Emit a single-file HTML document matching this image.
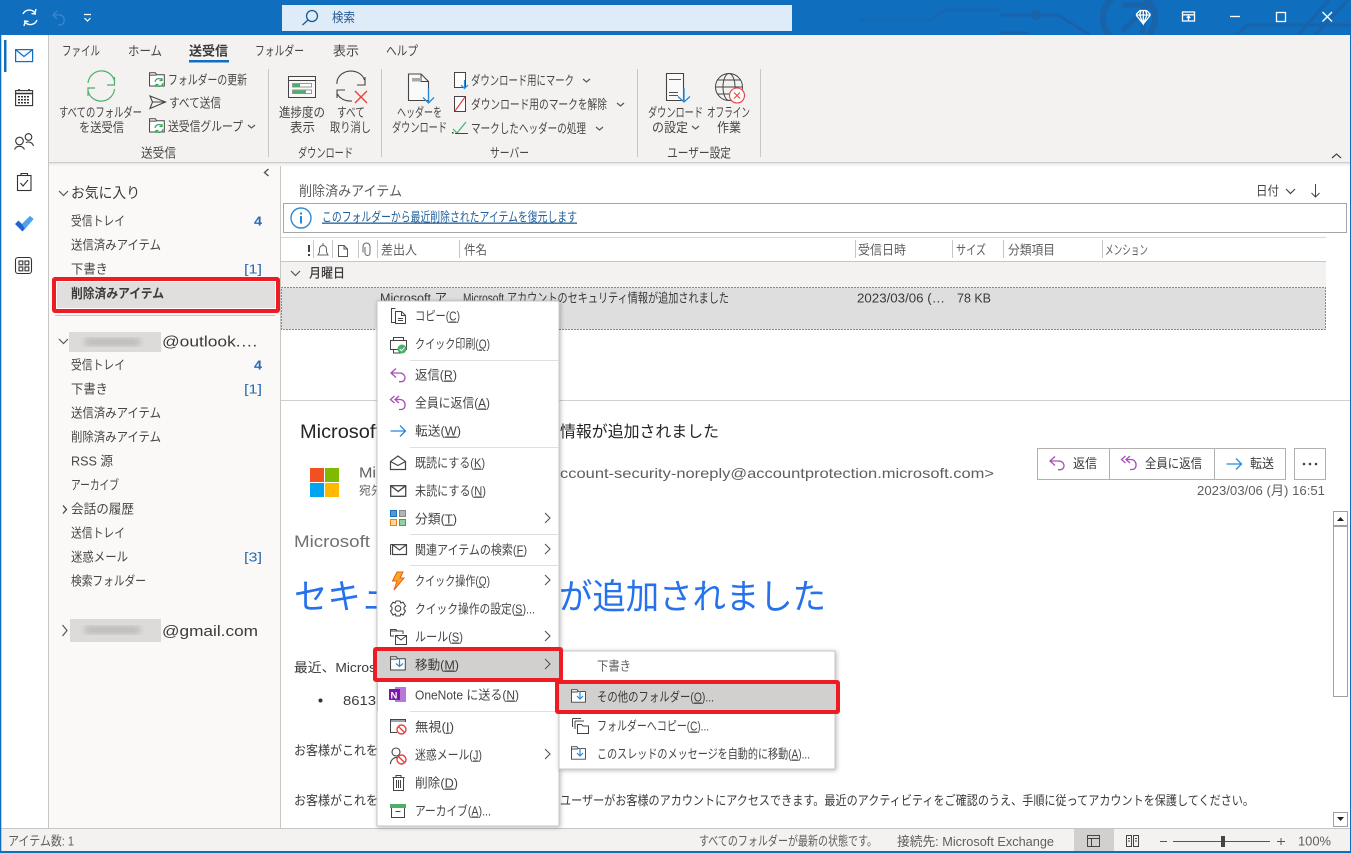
<!DOCTYPE html>
<html lang="ja"><head><meta charset="utf-8"><title>Outlook</title>
<style>
html,body{margin:0;padding:0;background:#fff;overflow:hidden}
svg{display:block}
text{font-family:"Liberation Sans","Noto Sans CJK JP",sans-serif;font-size:13px;fill:#484644;white-space:pre}
.u{text-decoration:underline}
.d{fill:#3b3a39}
.g{fill:#605e5c}
.b{font-weight:700}
.n{fill:none;stroke:#444;stroke-width:1.2}
.s{fill:none;stroke:#c8c6c4;stroke-width:1}
.c{fill:#2b6cb0}
</style></head><body>
<svg width="1351" height="853" viewBox="0 0 1351 853" xmlns="http://www.w3.org/2000/svg">
<defs>
<filter id="sh" x="-10%" y="-10%" width="120%" height="120%"><feDropShadow dx="1" dy="1" stdDeviation="2.5" flood-color="#000" flood-opacity=".28"/></filter>
<filter id="bl"><feGaussianBlur stdDeviation="3"/></filter>
<g id="reply" fill="none" stroke-width="1.3"><path d="M6 1.5 L1 6 L6 10.5 M1 6 H10 A5 5 0 0 1 15 11 A3.7 3.7 0 0 1 11.3 14.7 H9"/></g>
<g id="replyall" fill="none" stroke-width="1.3"><path d="M4.5 1 L0.5 4.5 L4.5 8 M9 1 L5 4.5 L9 8 M5 4.5 H10 A5 5 0 0 1 15 10 A4 4 0 0 1 11 14.5 H9"/></g>
<g id="fwd" fill="none" stroke-width="1.3"><path d="M0.5 8 H15.5 M10 2.5 L15.5 8 L10 13.5"/></g>
<g id="env" fill="#fff" stroke-width="1.3"><rect x=".7" y=".7" width="15" height="10.6"/><path d="M.7 .7 L8.2 6.5 L15.7 .7" fill="none"/></g>
<g id="fold"><path d="M.6 3.5 V15.5 H17 V3 H8.5 L7 .8 H.6 V3.5 H8" fill="#fff" stroke="#444" stroke-width="1.1"/></g>
<path id="chv" d="M0 0 L3.5 3 L7 0" fill="none" stroke="#555" stroke-width="1.2"/>
<path id="chr" d="M0 0 L5 5 L0 10" fill="none" stroke="#555" stroke-width="1.1"/>
</defs>

<!-- Window base -->
<rect width="1351" height="853" fill="#fff"/>
<rect width="1351" height="35" fill="#106ebe"/>
<g fill="none" stroke="#1a62a8" stroke-width="3" opacity=".9">
<path d="M1000 15 H1058 L1090 35"/><path d="M1237 35 L1247 25 H1351"/><path d="M1298 35 L1329 0 M1315 35 L1348 0"/><path d="M1000 33 H1028"/>
<circle cx="1036" cy="15" r="3.5"/><circle cx="1129" cy="18" r="26" stroke-width="6"/>
<path d="M1122 5 H1147 L1142 33 M1148 6 L1122 31" stroke-width="5"/>
<path d="M860 20 H930 M930 20 L945 10 H1000" opacity=".5"/>
</g>
<rect x="282" y="5" width="510" height="26" fill="#deecf9"/>
<g fill="none" stroke="#fff" stroke-width="1.4"><path d="M23 14 A7 7 0 0 1 35 13 L36 9 M36 14 L31.5 13.6"/><path d="M37 20 A7 7 0 0 1 25 22 L24 26 M24 21 L28.5 21.4"/></g>
<path d="M57 11 L53 15 L57 19 M53 15 H61 A5.5 5.5 0 0 1 61 25 H58" fill="none" stroke="#3b86cb" stroke-width="1.3"/>
<path d="M84 14.5 H91 M84.5 18 L87.5 21 L90.5 18" fill="none" stroke="#fff" stroke-width="1.2"/>
<g fill="none" stroke="#1e5a9a" stroke-width="1.3"><circle cx="312" cy="16" r="5.5"/><path d="M308 20 L302.5 25"/></g>
<text x="332" y="22" textLength="23" lengthAdjust="spacingAndGlyphs" style="fill:#2b5c8f">検索</text>
<g fill="none" stroke="#fff" stroke-width="1.3">
<path d="M1136.5 14 L1140 10.5 H1146.5 L1150 14 V15.5 L1143.3 24 L1136.5 15.5 Z M1136.5 15 H1150 M1141 10.5 L1139.6 15 L1143.3 24 L1147 15 L1145.6 10.5 M1143.3 10.5 V24"/>
<rect x="1182.5" y="12" width="12" height="9"/><path d="M1182.5 14.8 H1194.5 M1188.5 20.5 V16.5 M1186.7 18 L1188.5 16.2 L1190.3 18"/>
<path d="M1230 16.5 H1240"/><rect x="1276.5" y="12.5" width="9" height="9"/><path d="M1322.5 12 L1332 21.5 M1332 12 L1322.5 21.5"/>
</g>

<!-- Ribbon -->
<rect x="49" y="35" width="1301" height="127" fill="#f3f2f1"/>
<rect x="49" y="162" width="1301" height="1.5" fill="#cfcecc"/>
<rect x="49" y="164" width="1301" height="2" fill="#f4f4f4"/>
<text x="62" y="55.500" textLength="38" lengthAdjust="spacingAndGlyphs">ファイル</text>
<text x="128" y="55.500" textLength="34" lengthAdjust="spacingAndGlyphs">ホーム</text>
<text x="189" y="55.500" textLength="39" lengthAdjust="spacingAndGlyphs" class="b d">送受信</text>
<rect x="189" y="60" width="40" height="2.500" fill="#106ebe"/>
<text x="255" y="55.500" textLength="49" lengthAdjust="spacingAndGlyphs">フォルダー</text>
<text x="333" y="55.500" textLength="26" lengthAdjust="spacingAndGlyphs">表示</text>
<text x="386" y="55.500" textLength="32" lengthAdjust="spacingAndGlyphs">ヘルプ</text>
<g stroke="#c8c6c4"><path d="M268.500 69 V157 M381.500 69 V157 M637.500 69 V157 M760.500 69 V157"/></g>

<!-- Ribbon: send/receive -->
<g fill="none" stroke="#4caf6a" stroke-width="1.2">
<path d="M88 83 A13.500 13.500 0 0 1 114.500 81 M114.500 77 V85 H107"/><path d="M114.500 89 A13.500 13.500 0 0 1 88 91 M88 96 V88 H95"/>
</g>
<text x="59" y="117" textLength="83" lengthAdjust="spacingAndGlyphs">すべてのフォルダー</text>
<text x="79" y="132" textLength="45" lengthAdjust="spacingAndGlyphs">を送受信</text>
<g transform="translate(149,72)"><use href="#fold" transform="scale(.9)"/><path d="M6 10 A4 4 0 0 1 13 8 M14 11 A4 4 0 0 1 7 13 M13 6 V8.500 H10.500 M7 15 V12.500 H9.500" fill="none" stroke="#3aa35c" stroke-width="1.2"/></g>
<text x="168" y="84.500" textLength="79" lengthAdjust="spacingAndGlyphs">フォルダーの更新</text>
<path d="M150 96 L165.500 102 L150 108.500 L152.500 102 Z M152.500 102 H165" fill="none" stroke="#444" stroke-width="1.1"/>
<text x="169" y="107.500" textLength="52" lengthAdjust="spacingAndGlyphs">すべて送信</text>
<g transform="translate(149,118)"><use href="#fold" transform="scale(.9)"/><path d="M6 10 A4 4 0 0 1 13 8 M14 11 A4 4 0 0 1 7 13 M13 6 V8.500 H10.500 M7 15 V12.500 H9.500" fill="none" stroke="#3aa35c" stroke-width="1.2"/></g>
<text x="168" y="131" textLength="75" lengthAdjust="spacingAndGlyphs">送受信グループ</text>
<use href="#chv" x="248" y="125"/>
<text x="141" y="157.500" textLength="35" lengthAdjust="spacingAndGlyphs">送受信</text>

<!-- Ribbon: download -->
<g><rect x="288.500" y="76.500" width="27" height="21" fill="#f8f8f8" stroke="#444"/><path d="M288.500 80.500 H315.500" stroke="#444"/><rect x="292.500" y="83.500" width="19" height="3.500" fill="#fff" stroke="#999"/><rect x="292.500" y="90" width="19" height="3.500" fill="#fff" stroke="#999"/><rect x="293" y="84" width="7" height="3" fill="#4caf6a"/><rect x="293" y="90.500" width="13" height="3" fill="#4caf6a"/></g>
<text x="279" y="117" textLength="46" lengthAdjust="spacingAndGlyphs">進捗度の</text>
<text x="290" y="132" textLength="25" lengthAdjust="spacingAndGlyphs">表示</text>
<g fill="none" stroke="#444" stroke-width="1.1"><path d="M337 84 A14 12 0 0 1 364.500 80 M365 77 V85 H357"/><path d="M337 98 V90 H345 M337.500 94 A14 10 0 0 0 352 101"/></g>
<path d="M355 91 L367 103 M367 91 L355 103" stroke="#e8413c" stroke-width="1.400"/>
<text x="337" y="117" textLength="28" lengthAdjust="spacingAndGlyphs">すべて</text>
<text x="330" y="132" textLength="41" lengthAdjust="spacingAndGlyphs">取り消し</text>
<text x="298" y="157.500" textLength="55" lengthAdjust="spacingAndGlyphs">ダウンロード</text>

<!-- Ribbon: server -->
<g><path d="M408.500 74 H421 L428.500 81.500 V100.500 H408.500 Z" fill="#fafafa" stroke="#444" stroke-width="1.100"/><path d="M421 74 V81.500 H428.500" fill="none" stroke="#444"/><rect x="412" y="78" width="9" height="3.500" fill="#a8a8a8"/><path d="M428.500 88 V103 M423 97.500 L428.500 103 L434 97.500" fill="none" stroke="#2b88d8" stroke-width="1.300"/></g>
<text x="397" y="117" textLength="45" lengthAdjust="spacingAndGlyphs">ヘッダーを</text>
<text x="392" y="132" textLength="55" lengthAdjust="spacingAndGlyphs">ダウンロード</text>
<path d="M454.500 72.500 H465.500 V87.500 H454.500 Z" fill="#fff" stroke="#444"/><path d="M464.500 80 V88 M461 85 L464.500 88.500 L468 85" fill="none" stroke="#2b88d8" stroke-width="1.200"/>
<text x="471" y="85" textLength="103" lengthAdjust="spacingAndGlyphs">ダウンロード用にマーク</text><use href="#chv" x="583" y="79"/>
<rect x="454.500" y="96.500" width="11" height="15" fill="#fff" stroke="#444"/><path d="M455 111 L465 97" stroke="#e8413c" stroke-width="1.200"/>
<text x="471" y="109" textLength="136" lengthAdjust="spacingAndGlyphs">ダウンロード用のマークを解除</text><use href="#chv" x="617" y="103"/>
<path d="M453 129 L457 133 L466 122" fill="none" stroke="#4caf6a" stroke-width="1.200"/><path d="M455 133.500 H468" stroke="#444"/><rect x="452" y="132" width="1.500" height="1.500" fill="#333"/>
<text x="471" y="133" textLength="115" lengthAdjust="spacingAndGlyphs">マークしたヘッダーの処理</text><use href="#chv" x="596" y="127"/>
<text x="490" y="157.500" textLength="39" lengthAdjust="spacingAndGlyphs">サーバー</text>

<!-- Ribbon: user settings -->
<path d="M666.500 73.500 H683.500 V100.500 H666.500 Z" fill="#fafafa" stroke="#444" stroke-width="1.100"/><path d="M669 79.500 H681 M669 92.500 H678 M669 95.500 H678" stroke="#555"/>
<path d="M684 88 V102 M678 96.500 L684 102 L690 96.500" fill="none" stroke="#2b88d8" stroke-width="1.300"/>
<text x="648" y="117" textLength="55" lengthAdjust="spacingAndGlyphs">ダウンロード</text>
<text x="652" y="132" textLength="36" lengthAdjust="spacingAndGlyphs">の設定</text><use href="#chv" x="692" y="126"/>
<g fill="none" stroke="#444"><circle cx="729" cy="87" r="13.500"/><ellipse cx="729" cy="87" rx="6" ry="13.500"/><path d="M715.500 87 H742.500 M717.500 80 H740.500 M717.500 94 H740.500"/></g>
<circle cx="737" cy="95.500" r="7.500" fill="#fff" stroke="#e8413c" stroke-width="1.100"/><path d="M734 92.500 L740 98.500 M740 92.500 L734 98.500" stroke="#e8413c"/>
<text x="707" y="117" textLength="43" lengthAdjust="spacingAndGlyphs">オフライン</text>
<text x="717" y="132" textLength="24" lengthAdjust="spacingAndGlyphs">作業</text>
<text x="667" y="157.500" textLength="64" lengthAdjust="spacingAndGlyphs">ユーザー設定</text>
<path d="M1332 158 L1336.500 154 L1341 158" fill="none" stroke="#444" stroke-width="1.200"/>

<!-- Left rail -->
<rect x="0" y="35" width="48" height="818" fill="#fff"/>
<rect x="48" y="35" width="1" height="794" fill="#c8c6c4"/>
<rect x="4" y="40" width="2.500" height="32" fill="#106ebe"/>
<g stroke="#106ebe" fill="#f6fbff" stroke-width="1.200"><rect x="15.600" y="49.600" width="17" height="12"/><path d="M15.600 49.600 L24 56.500 L32.600 49.600" fill="none"/></g>
<g stroke="#333" fill="none" stroke-width="1.100"><rect x="15.600" y="90.600" width="17" height="15"/><path d="M15.600 93.500 H32.600 M19 89 V91 M29 89 V91" stroke-width="1.600"/></g>
<path d="M18 96h2v1.500h-2zM21 96h2v1.500h-2zM24 96h2v1.500h-2zM27 96h2v1.500h-2zM18 99h2v1.500h-2zM21 99h2v1.500h-2zM24 99h2v1.500h-2zM27 99h2v1.500h-2zM18 102h2v1.500h-2zM21 102h2v1.500h-2zM24 102h2v1.500h-2zM27 102h2v1.500h-2z" fill="#333"/>
<g fill="none" stroke="#333" stroke-width="1.100"><circle cx="19.500" cy="141" r="3.800"/><path d="M14.500 149.500 A5.500 5.500 0 0 1 24.500 149.500"/><circle cx="28.500" cy="137" r="3.300"/><path d="M26 142.500 A5.500 5.500 0 0 1 33.500 146"/></g>
<g fill="none" stroke="#333" stroke-width="1.100"><rect x="17.500" y="175.500" width="13.500" height="15"/><path d="M21 175.500 V173.500 H27.500 V175.500"/><path d="M20.500 183 L23 186 L28 180"/></g>
<path d="M15 224 L18.500 220.500 L22 224 L30 216 L33.500 219 L22.500 231.500 Z" fill="#2564cf"/>
<path d="M22 224 L30 216 L33.500 219 L25 229 Z" fill="#4da3f0"/>
<g fill="none" stroke="#333" stroke-width="1.100"><rect x="15.500" y="257.500" width="16" height="16" rx="2.500"/><rect x="19" y="261" width="3.800" height="3.800"/><rect x="25" y="261" width="3.800" height="3.800"/><rect x="19" y="267" width="3.800" height="3.800"/><rect x="25" y="267" width="3.800" height="3.800"/></g>

<!-- Folder pane -->
<rect x="49" y="166" width="231" height="663" fill="#faf9f8"/>
<rect x="280" y="166" width="1" height="663" fill="#c8c6c4"/>
<path d="M268.500 169 L264.500 172.500 L268.500 176" fill="none" stroke="#555" stroke-width="1.400"/>
<path d="M59 191 L63.500 195.500 L68 191" fill="none" stroke="#555" stroke-width="1.200"/>
<text x="71" y="198" textLength="69" lengthAdjust="spacingAndGlyphs" style="font-size:14.500px" class="d">お気に入り</text>
<text x="71" y="225.500" textLength="54" lengthAdjust="spacingAndGlyphs">受信トレイ</text>
<text x="254" y="225.500" class="b c" style="font-size:13px" textLength="8" lengthAdjust="spacingAndGlyphs">4</text>
<text x="71" y="249.500" textLength="90" lengthAdjust="spacingAndGlyphs">送信済みアイテム</text>
<text x="71" y="273.500" textLength="37" lengthAdjust="spacingAndGlyphs">下書き</text>
<text x="244" y="273.500" class="c" style="font-size:13px" textLength="18" lengthAdjust="spacingAndGlyphs">[1]</text>
<rect x="54" y="279" width="224" height="32" fill="#fff" stroke="#ed1c24" stroke-width="4" rx="1"/>
<rect x="57" y="282" width="218" height="26" fill="#e1dfdd"/>
<text x="71" y="298" textLength="93" lengthAdjust="spacingAndGlyphs" class="b d">削除済みアイテム</text>
<path d="M55 315.500 H275" stroke="#c8c6c4"/>
<path d="M59 339 L63.500 343.500 L68 339" fill="none" stroke="#555" stroke-width="1.200"/>
<rect x="69" y="332" width="92" height="20" fill="#dcdbd9"/><rect x="85" y="338" width="55" height="8" fill="#bdbcba" filter="url(#bl)"/>
<text x="162" y="346.500" textLength="96" lengthAdjust="spacingAndGlyphs" style="font-size:15px" class="d">@outlook.…</text>
<text x="71" y="369.500" textLength="54" lengthAdjust="spacingAndGlyphs">受信トレイ</text>
<text x="254" y="369.500" class="b c" style="font-size:13px" textLength="8" lengthAdjust="spacingAndGlyphs">4</text>
<text x="71" y="393.500" textLength="37" lengthAdjust="spacingAndGlyphs">下書き</text>
<text x="244" y="393.500" class="c" style="font-size:13px" textLength="18" lengthAdjust="spacingAndGlyphs">[1]</text>
<text x="71" y="417.500" textLength="90" lengthAdjust="spacingAndGlyphs">送信済みアイテム</text>
<text x="71" y="441.500" textLength="90" lengthAdjust="spacingAndGlyphs">削除済みアイテム</text>
<text x="71" y="465.500" textLength="42" lengthAdjust="spacingAndGlyphs">RSS 源</text>
<text x="71" y="489.500" textLength="48" lengthAdjust="spacingAndGlyphs">アーカイブ</text>
<path d="M63 505.500 L66.500 509.500 L63 513.500" fill="none" stroke="#444" stroke-width="1.300"/>
<text x="71" y="513.500" textLength="63" lengthAdjust="spacingAndGlyphs">会話の履歴</text>
<text x="71" y="537.500" textLength="54" lengthAdjust="spacingAndGlyphs">送信トレイ</text>
<text x="71" y="561.500" textLength="57" lengthAdjust="spacingAndGlyphs">迷惑メール</text>
<text x="244" y="561.500" class="c" style="font-size:13px" textLength="18" lengthAdjust="spacingAndGlyphs">[3]</text>
<text x="71" y="585.500" textLength="75" lengthAdjust="spacingAndGlyphs">検索フォルダー</text>
<path d="M62.500 625 L67 630.500 L62.500 636" fill="none" stroke="#555" stroke-width="1.200"/>
<rect x="70" y="619" width="91" height="23" fill="#dcdbd9"/><rect x="85" y="626" width="55" height="8" fill="#bdbcba" filter="url(#bl)"/>
<text x="162" y="636" textLength="96" lengthAdjust="spacingAndGlyphs" style="font-size:15px" class="d">@gmail.com</text>

<!-- List -->
<text x="299" y="196" textLength="103" lengthAdjust="spacingAndGlyphs" style="font-size:14px" class="g">削除済みアイテム</text>
<text x="1256" y="195.500" textLength="23" lengthAdjust="spacingAndGlyphs">日付</text>
<path d="M1286 189 L1290.500 193.500 L1295 189" fill="none" stroke="#444" stroke-width="1.200"/>
<path d="M1315.500 184 V197 M1311.500 193 L1315.500 197 L1319.500 193" fill="none" stroke="#444"/>
<rect x="283.500" y="203.500" width="1063" height="29" fill="#fff" stroke="#a6a6a6"/>
<circle cx="301" cy="218" r="10" fill="#fff" stroke="#2b88d8" stroke-width="1.400"/>
<rect x="300" y="216" width="2" height="7.500" fill="#2b88d8"/><rect x="300" y="212.500" width="2" height="2" fill="#2b88d8"/>
<text x="322" y="221.500" textLength="255" lengthAdjust="spacingAndGlyphs" style="fill:#1f5f9c" class="u">このフォルダーから最近削除されたアイテムを復元します</text>

<rect x="281" y="237" width="1045" height="1" fill="#d8d8d8"/>
<rect x="281" y="261" width="1045" height="1" fill="#c8c6c4"/>
<rect x="308" y="245" width="2" height="7" fill="#444"/><rect x="308" y="254" width="2" height="2" fill="#444"/>
<g stroke="#c8c6c4"><path d="M313.500 240 V258 M332.500 240 V258 M358.500 240 V258 M377.500 240 V258 M459.500 240 V258 M855.500 240 V258 M952.500 240 V258 M1003.500 240 V258 M1102.500 240 V258"/></g>
<path d="M318 255 H328 L326.500 252 V249 A3.500 3.500 0 0 0 319.500 249 V252 Z M323 243 V245" fill="none" stroke="#666"/>
<path d="M338.500 245.500 H344 L347.500 249 V256.500 H338.500 Z M344 245.500 V249 H347.500" fill="none" stroke="#555"/>
<path d="M365 247.500 V253.500 A2.500 2.500 0 0 0 370 253.500 V247 A3.500 3.500 0 0 0 363 247 V253" fill="none" stroke="#666" transform="translate(0,-.5)"/>
<text x="381" y="254.500" textLength="36" lengthAdjust="spacingAndGlyphs" class="g">差出人</text>
<text x="464" y="254.500" textLength="23" lengthAdjust="spacingAndGlyphs" class="g">件名</text>
<text x="858" y="254.500" textLength="48" lengthAdjust="spacingAndGlyphs" class="g">受信日時</text>
<text x="956" y="254.500" textLength="30" lengthAdjust="spacingAndGlyphs" class="g">サイズ</text>
<text x="1008" y="254.500" textLength="47" lengthAdjust="spacingAndGlyphs" class="g">分類項目</text>
<text x="1105" y="254.500" textLength="43" lengthAdjust="spacingAndGlyphs" class="g">メンション</text>
<rect x="281" y="262" width="1045" height="25" fill="#f3f2f1"/>
<path d="M291 271 L295.500 275.500 L300 271" fill="none" stroke="#555" stroke-width="1.200"/>
<text x="309" y="277.500" textLength="36" lengthAdjust="spacingAndGlyphs" class="d" style="font-weight:500">月曜日</text>
<rect x="281.500" y="287.500" width="1044" height="42" fill="#dedede"/>
<rect x="281.500" y="287.500" width="1044" height="42" fill="none" stroke="#222" stroke-dasharray="1 2" shape-rendering="crispEdges"/>
<text x="380" y="302.500" textLength="67" lengthAdjust="spacingAndGlyphs" class="d">Microsoft ア</text>
<text x="463" y="302.500" textLength="266" lengthAdjust="spacingAndGlyphs" class="d">Microsoft アカウントのセキュリティ情報が追加されました</text>
<text x="857" y="302.500" textLength="88" lengthAdjust="spacingAndGlyphs" class="d">2023/03/06 (…</text>
<text x="957" y="302.500" textLength="34" lengthAdjust="spacingAndGlyphs" class="d">78 KB</text>
<rect x="281" y="400" width="1070" height="1" fill="#d2d0ce"/>

<!-- Reading pane -->
<text x="300" y="438" textLength="81" lengthAdjust="spacingAndGlyphs" style="font-size:19px;fill:#252423">Microsoft</text>
<text x="560" y="437" textLength="159" lengthAdjust="spacingAndGlyphs" style="font-size:16px;fill:#252423">情報が追加されました</text>
<rect x="310" y="468" width="14" height="14" fill="#f25022"/><rect x="325" y="468" width="14" height="14" fill="#7fba00"/>
<rect x="310" y="483" width="14" height="14" fill="#00a4ef"/><rect x="325" y="483" width="14" height="14" fill="#ffb900"/>
<text x="359" y="477.500" textLength="17" lengthAdjust="spacingAndGlyphs" style="font-size:15px" class="g">Mi</text>
<text x="359" y="494.500" class="g" style="font-size:12px">宛先</text>
<text x="560" y="478" textLength="434" lengthAdjust="spacingAndGlyphs" style="font-size:14px" class="g">ccount-security-noreply@accountprotection.microsoft.com&gt;</text>

<rect x="1037.500" y="448.500" width="248" height="31" fill="#fff" stroke="#b3b0ad"/>
<path d="M1109.500 449 V479 M1214.500 449 V479" stroke="#b3b0ad"/>
<use href="#reply" x="1049" y="455" stroke="#a64fb5"/>
<text x="1073" y="468" textLength="24" lengthAdjust="spacingAndGlyphs" class="d">返信</text>
<use href="#replyall" x="1121" y="455" stroke="#a64fb5"/>
<text x="1145" y="468" textLength="57" lengthAdjust="spacingAndGlyphs" class="d">全員に返信</text>
<use href="#fwd" x="1226" y="456" stroke="#2b88d8"/>
<text x="1250" y="468" textLength="24" lengthAdjust="spacingAndGlyphs" class="d">転送</text>
<rect x="1294.500" y="448.500" width="31" height="31" fill="#fff" stroke="#b3b0ad"/>
<circle cx="1304" cy="464" r="1.300" fill="#444"/><circle cx="1310" cy="464" r="1.300" fill="#444"/><circle cx="1316" cy="464" r="1.300" fill="#444"/>
<text x="1197" y="495" textLength="128" lengthAdjust="spacingAndGlyphs" class="g">2023/03/06 (月) 16:51</text>

<rect x="1333" y="511" width="15" height="316" fill="#fff"/>
<rect x="1333.500" y="511.500" width="14" height="14" fill="#fff" stroke="#a0a0a0"/>
<path d="M1337 521 H1344 L1340.500 517 Z" fill="#222"/>
<rect x="1333.500" y="526.500" width="14" height="170" fill="#fff" stroke="#a0a0a0"/>
<rect x="1333.500" y="812.500" width="14" height="14" fill="#fff" stroke="#a0a0a0"/>
<path d="M1337 817 H1344 L1340.500 821 Z" fill="#222"/>

<text x="294" y="547" textLength="76" lengthAdjust="spacingAndGlyphs" style="font-size:17px;fill:#707070">Microsoft</text>
<text x="294" y="609" textLength="532" lengthAdjust="spacingAndGlyphs" style="font-size:35px;fill:#2672ec">セキュリティ情報が追加されました</text>
<text x="294" y="672" style="font-size:13px" class="d" textLength="82" lengthAdjust="spacingAndGlyphs">最近、Micros</text>
<circle cx="320.500" cy="700.500" r="2" fill="#333"/>
<text x="343" y="705" style="font-size:13px" class="d" textLength="33" lengthAdjust="spacingAndGlyphs">8613</text>
<text x="294" y="755" style="font-size:13px" class="d" textLength="84" lengthAdjust="spacingAndGlyphs">お客様がこれを</text>
<text x="294" y="805" style="font-size:13px" class="d" textLength="84" lengthAdjust="spacingAndGlyphs">お客様がこれを</text>
<text x="560" y="805" textLength="694" lengthAdjust="spacingAndGlyphs" style="font-size:13px" class="d">ユーザーがお客様のアカウントにアクセスできます。最近のアクティビティをご確認のうえ、手順に従ってアカウントを保護してください。</text>

<!-- Status bar -->
<rect x="1" y="829" width="1349" height="22" fill="#f3f2f1"/>
<rect x="1" y="828" width="1349" height="1" fill="#c8c6c4"/>
<text x="8" y="845.500" textLength="66" lengthAdjust="spacingAndGlyphs" class="g">アイテム数: 1</text>
<text x="699" y="845.500" textLength="178" lengthAdjust="spacingAndGlyphs" class="g">すべてのフォルダーが最新の状態です。</text>
<text x="897" y="846" textLength="157" lengthAdjust="spacingAndGlyphs" class="g">接続先: Microsoft Exchange</text>
<rect x="1074" y="829" width="40" height="22" fill="#d2d0ce"/>
<path d="M1087.500 835.500 H1099.500 V846.500 H1087.500 Z M1087.500 838.500 H1099.500 M1091.500 838.500 V846.500" fill="none" stroke="#444"/>
<path d="M1126.500 835.500 H1131.500 V846.500 H1126.500 Z M1133.500 835.500 H1138.500 V846.500 H1133.500 Z M1128 838.500 H1130 M1128 841 H1130 M1135 838.500 H1137 M1135 841 H1137" fill="none" stroke="#444"/>
<path d="M1160 841.500 H1167 M1173 841.500 H1270 M1277 841.500 H1285 M1281 838 V845" stroke="#555"/>
<rect x="1221" y="836" width="4" height="11" fill="#444"/>
<text x="1298" y="845.500" textLength="33" lengthAdjust="spacingAndGlyphs" class="g">100%</text>
<!-- Window border -->
<rect x="0" y="35" width="1.300" height="818" fill="#106ebe"/>
<rect x="1350" y="35" width="1" height="818" fill="#106ebe"/>
<rect x="0" y="851" width="1351" height="2" fill="#106ebe"/>

<!-- Context menu -->
<rect x="377" y="301" width="182" height="525" fill="#fff" stroke="#c8c6c4" filter="url(#sh)"/>
<g stroke="#e1dfdd"><path d="M410 360.500 H558 M410 447.500 H558 M410 534.500 H558 M410 565.500 H558 M410 711.500 H558"/></g>

<path d="M395.500 308.500 H391.500 V322.500 H395.500 M395.500 311.500 H401.500 L405.500 315.500 V323.500 H395.500 Z M401.500 311.500 V315.500 H405.500 M398 318.500 H403 M398 320.500 H403" fill="none" stroke="#444"/>
<text x="415" y="320.500" textLength="45" lengthAdjust="spacingAndGlyphs">コピー(<tspan class="u">C</tspan>)</text>

<path d="M393.500 340.500 V337.500 H403.500 V340.500 M390.500 340.500 H406.500 V349.500 H390.500 Z M393.500 349.500 V353 H401" fill="#fff" stroke="#444"/>
<circle cx="402" cy="349" r="4.500" fill="#4caf6a"/><path d="M399.800 349 L401.500 350.800 L404.500 347.500" fill="none" stroke="#fff"/>
<text x="415" y="348.500" textLength="75" lengthAdjust="spacingAndGlyphs">クイック印刷(<tspan class="u">Q</tspan>)</text>

<use href="#reply" x="390" y="367" stroke="#a64fb5"/>
<text x="415" y="379.500" textLength="42" lengthAdjust="spacingAndGlyphs">返信(<tspan class="u">R</tspan>)</text>
<use href="#replyall" x="390" y="395" stroke="#a64fb5"/>
<text x="415" y="407.500" textLength="75" lengthAdjust="spacingAndGlyphs">全員に返信(<tspan class="u">A</tspan>)</text>
<use href="#fwd" x="390" y="423" stroke="#2b88d8"/>
<text x="415" y="435.500" textLength="46" lengthAdjust="spacingAndGlyphs">転送(<tspan class="u">W</tspan>)</text>

<path d="M390.500 461.500 L398 456 L405.500 461.500 V469.500 H390.500 Z M390.500 461.500 L398 465.500 L405.500 461.500" fill="#fff" stroke="#444" stroke-width="1.200"/>
<text x="415" y="467.500" textLength="70" lengthAdjust="spacingAndGlyphs">既読にする(<tspan class="u">K</tspan>)</text>
<use href="#env" x="390" y="485" stroke="#444"/>
<text x="415" y="495.500" textLength="71" lengthAdjust="spacingAndGlyphs">未読にする(<tspan class="u">N</tspan>)</text>

<rect x="390.500" y="510.500" width="6" height="6" fill="#4a9ee0" stroke="#1e6fb8"/><rect x="399.500" y="510.500" width="6" height="6" fill="#b4b4b4" stroke="#888"/>
<rect x="390.500" y="519.500" width="6" height="6" fill="#ffd59a" stroke="#e8851a"/><rect x="399.500" y="519.500" width="6" height="6" fill="#92d2a2" stroke="#3aa35c"/>
<text x="415" y="523.500" textLength="42" lengthAdjust="spacingAndGlyphs">分類(<tspan class="u">T</tspan>)</text>
<use href="#chr" x="545" y="513"/>

<g transform="translate(390,544)"><path d="M.5 .5 H3 M.5 .5 V11" stroke="#444" fill="none"/><use href="#env" x="2" y="0" stroke="#444" transform="scale(.93)"/></g>
<text x="415" y="554.500" textLength="112" lengthAdjust="spacingAndGlyphs">関連アイテムの検索(<tspan class="u">F</tspan>)</text>
<use href="#chr" x="545" y="544"/>

<path d="M397 572 H403 L400 578 H404 L394 590 L397 581 H392.500 Z" fill="#f9a825" stroke="#e8601a" stroke-width="1"/>
<text x="415" y="585.500" textLength="75" lengthAdjust="spacingAndGlyphs">クイック操作(<tspan class="u">Q</tspan>)</text>
<use href="#chr" x="545" y="575"/>

<g fill="none" stroke="#444" stroke-width="1.100"><circle cx="398" cy="608.500" r="2.800"/><path d="M396 601 H400 L400.800 603 L403 602.200 L405.500 606 L404 607.500 V609.500 L405.500 611 L403 615 L400.800 614 L400 616 H396 L395.200 614 L393 615 L390.500 611 L392 609.500 V607.500 L390.500 606 L393 602.200 L395.200 603 Z"/></g>
<text x="415" y="613.500" textLength="120" lengthAdjust="spacingAndGlyphs">クイック操作の設定(<tspan class="u">S</tspan>)...</text>

<path d="M390.500 631 V629.500 H396 L397 631 H403 V634 M390.500 631 H403 M390.500 631 V636 H394" fill="#fff" stroke="#444"/>
<path d="M395.500 635.500 H406.500 V644.500 H395.500 Z M395.500 635.500 L401 640 L406.500 635.500" fill="#fff" stroke="#444"/>
<text x="415" y="641.500" textLength="48" lengthAdjust="spacingAndGlyphs">ルール(<tspan class="u">S</tspan>)</text>
<use href="#chr" x="545" y="631"/>

<!-- Submenu -->
<rect x="559" y="651" width="276" height="118" fill="#fff" stroke="#c8c6c4" filter="url(#sh)"/>
<text x="597" y="670.500" textLength="34" lengthAdjust="spacingAndGlyphs" class="g">下書き</text>
<rect x="557" y="682" width="281" height="30" fill="#d2d0ce" stroke="#ed1c24" stroke-width="4" rx="1"/>
<g transform="translate(571,689)"><use href="#fold" transform="scale(.85,.85)"/><path d="M9 2 V10 M6 7 L9 10 L12 7" fill="none" stroke="#2b88d8" stroke-width="1.200"/></g>
<text x="597" y="701.500" textLength="117" lengthAdjust="spacingAndGlyphs" class="d">その他のフォルダー(<tspan class="u">O</tspan>)...</text>
<path d="M572.500 718.500 H581 M572.500 718.500 V727 M575 721 H584 M575 721 V729" fill="none" stroke="#444"/>
<path d="M577.500 724.500 H581.500 L583 726 H588.500 V733.500 H577.500 Z" fill="#fff" stroke="#444"/>
<text x="597" y="730.500" textLength="112" lengthAdjust="spacingAndGlyphs">フォルダーへコピー(<tspan class="u">C</tspan>)...</text>
<g transform="translate(571,746)"><use href="#fold" transform="scale(.85,.85)"/><path d="M9 2 V10 M6 7 L9 10 L12 7" fill="none" stroke="#2b88d8" stroke-width="1.200"/></g>
<text x="597" y="758.500" textLength="213" lengthAdjust="spacingAndGlyphs">このスレッドのメッセージを自動的に移動(<tspan class="u">A</tspan>)...</text>

<!-- Move item -->
<rect x="375" y="649" width="186" height="31" fill="#d2d0ce" stroke="#ed1c24" stroke-width="4" rx="1"/>
<g transform="translate(390,656)"><use href="#fold" transform="scale(.9)"/><path d="M9.500 2 V10.500 M6 7.500 L9.500 10.500 L13 7.500" fill="none" stroke="#2b88d8" stroke-width="1.200"/></g>
<text x="415" y="669.500" textLength="44" lengthAdjust="spacingAndGlyphs" class="d">移動(<tspan class="u">M</tspan>)</text>
<use href="#chr" x="545" y="659"/>
<rect x="377" y="682" width="178" height="29" fill="#fff"/>
<rect x="377" y="682" width="1" height="29" fill="#c8c6c4"/>

<rect x="395" y="687" width="11" height="15" fill="#ba77d6" rx=".5"/>
<rect x="389" y="689" width="11" height="11" fill="#7719aa" rx=".5"/>
<text x="390.500" y="698.500" style="font-size:9.500px;font-weight:700;fill:#fff">N</text>
<text x="415" y="699.500" textLength="104" lengthAdjust="spacingAndGlyphs">OneNote に送る(<tspan class="u">N</tspan>)</text>

<path d="M390.500 721 V719.500 H405.500 V722 M390.500 721 H405.500 M390.500 721 V732.500 H397" fill="none" stroke="#444"/>
<circle cx="401.500" cy="729.500" r="4.500" fill="#fff" stroke="#e8413c" stroke-width="1.400"/><path d="M398.500 726.500 L404.500 732.500" stroke="#e8413c" stroke-width="1.400"/>
<text x="415" y="731.500" textLength="39" lengthAdjust="spacingAndGlyphs">無視(<tspan class="u">I</tspan>)</text>

<g fill="none" stroke="#444" stroke-width="1.100"><circle cx="396" cy="752" r="4"/><path d="M390.500 764 A6.500 6.500 0 0 1 398 757.500"/></g>
<circle cx="401.500" cy="759.500" r="4.500" fill="#fff" stroke="#e8413c" stroke-width="1.400"/><path d="M398.500 756.500 L404.500 762.500" stroke="#e8413c" stroke-width="1.400"/>
<text x="415" y="759.500" textLength="67" lengthAdjust="spacingAndGlyphs">迷惑メール(<tspan class="u">J</tspan>)</text>
<use href="#chr" x="545" y="749"/>

<path d="M392.500 777.500 H404.500 M396 777.500 V775.500 H401 V777.500 M393.500 777.500 V790.500 H403.500 V777.500 M396.500 780 V788 M398.500 780 V788 M400.500 780 V788" fill="none" stroke="#444"/>
<text x="415" y="787.500" textLength="43" lengthAdjust="spacingAndGlyphs">削除(<tspan class="u">D</tspan>)</text>

<rect x="390" y="804" width="16" height="4" fill="#4caf6a"/>
<path d="M391.500 808 V817.500 H404.500 V808 M395.500 811.500 H400.500" fill="none" stroke="#444"/>
<text x="415" y="815.500" textLength="76" lengthAdjust="spacingAndGlyphs">アーカイブ(<tspan class="u">A</tspan>)...</text>
</svg>
</body></html>
